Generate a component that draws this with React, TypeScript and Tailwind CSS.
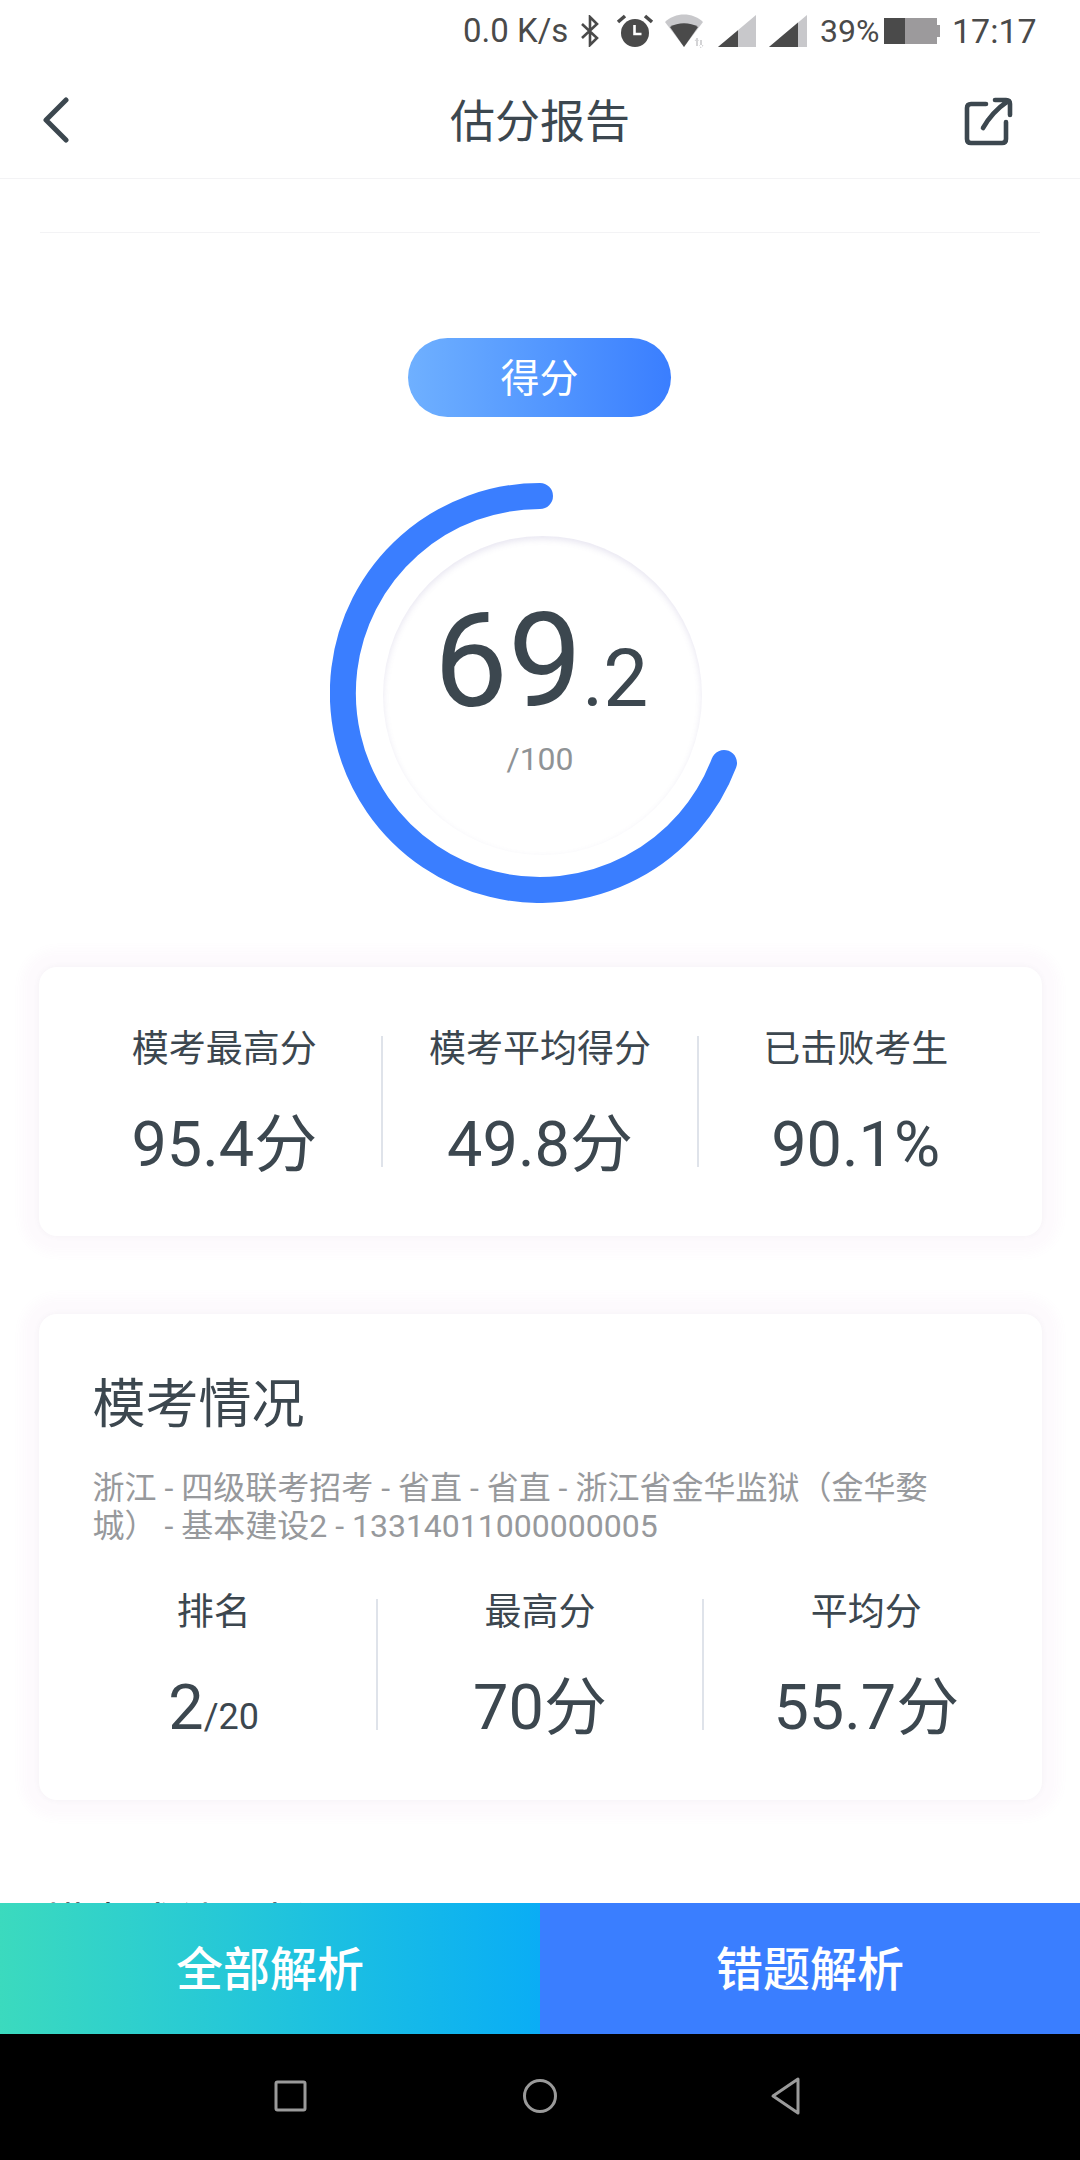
const ink = "text-[#3c474f]"

function StatusBar() {
  return (
    <div className="flex h-[60px] items-center pl-[463px] pt-[2px] text-[33px] text-[#4a4a4a]">
      <span className="w-[116px] whitespace-nowrap">0.0 K/s</span>
      <svg width="22" height="32" viewBox="0 0 22 32" fill="none" stroke="#4a4a4a" strokeWidth="2.6" className="mr-[15px] shrink-0">
        <path d="M3 9l15 14-7 7V2l7 7L3 23" />
      </svg>
      <svg width="38" height="34" viewBox="0 0 38 34" className="mr-[11px] shrink-0">
        <circle cx="19" cy="19" r="14" fill="#4a4a4a" />
        <path d="M18.5 11v9h7" fill="none" stroke="#fff" strokeWidth="2.6" />
        <path d="M2 8l7-6M36 8l-7-6" stroke="#4a4a4a" strokeWidth="3.6" />
      </svg>
      <svg width="40" height="34" viewBox="0 0 40 34" className="mr-[13px] shrink-0">
        <path d="M0 8C10-2 28-2 38 8L19 33z" fill="#c8c8cb" />
        <path d="M5 13c8-5 20-5 28 0L19 33z" fill="#4a4a4a" />
        <path d="M31 24h2v8h-2zM35 26h2v8h-2zM29.5 27l2.5-3 2 3zM34 31l2.500 3 2-3z" fill="#d4d4d6" />
      </svg>
      <svg width="38" height="32" viewBox="0 0 38 32" className="mr-[13px] shrink-0">
        <path d="M38 0v32H0z" fill="#c8c8cb" />
        <path d="M20 15.200V32H0z" fill="#4a4a4a" />
      </svg>
      <svg width="38" height="32" viewBox="0 0 38 32" className="mr-[13px] shrink-0">
        <path d="M38 0v32H0z" fill="#c8c8cb" />
        <path d="M29 7.600V32H0z" fill="#4a4a4a" />
      </svg>
      <span className="w-[64px] whitespace-nowrap text-[32px]">39%</span>
      <div className="mr-[12px] flex h-[26px] w-[56px] shrink-0 items-center">
        <div className="h-full w-[21px] bg-[#4a4a4a]" />
        <div className="h-full w-[32px] bg-[#9c9a9c]" />
        <div className="h-[12px] w-[3px] bg-[#9c9a9c]" />
      </div>
      <span className="whitespace-nowrap text-[34px]">17:17</span>
    </div>
  )
}

function Header() {
  return (
    <div className="grid h-[119px] grid-cols-[1fr_auto_1fr] items-center border-b border-[#f3f3f5] pl-[42px] pr-[64px]">
      <svg width="28" height="46" viewBox="0 0 28 46" fill="none" stroke="#3c474f" strokeWidth="5" strokeLinecap="round" strokeLinejoin="round" className="mt-[1px]">
        <path d="M24 3L4 23l20 20" />
      </svg>
      <span className={`mt-[8px] pl-[22px] text-[45px] ${ink}`}>估分报告</span>
      <svg width="54" height="54" viewBox="0 0 54 54" fill="none" stroke="#3c474f" strokeWidth="4.600" strokeLinecap="round" strokeLinejoin="round" className="mt-[3px] justify-self-end">
        <path d="M24 10H9Q5 10 5 14V45Q5 49 9 49H40Q44 49 44 45V28" />
        <path d="M21 34Q30 18 46 7M33 6H44Q48 6 48 10V21" />
      </svg>
    </div>
  )
}

function Ring() {
  return (
    <div className="relative mt-[66px] h-[420px] w-[420px] shrink-0">
      <svg width="420" height="420" viewBox="0 0 420 420" className="absolute inset-0">
        <path d="M210 13A197 197 0 1 0 394 280" fill="none" stroke="#3a7eff" strokeWidth="26" strokeLinecap="round" />
      </svg>
      <div className="absolute left-[53px] top-[53px] h-[319px] w-[319px] rounded-full shadow-[inset_0_3px_6px_rgba(110,100,170,0.16)]" />
      <div className="absolute inset-x-0 top-[123px] flex flex-col items-center">
        <div className={`flex items-baseline pl-[2px] leading-[110px] ${ink}`}>
          <span className="text-[132px]">69</span>
          <span className="text-[80px]">.2</span>
        </div>
        <span className="mt-[5px] text-[32px] leading-[40px] text-[#8f9396]">/100</span>
      </div>
    </div>
  )
}

function Stat({ label, value, small, divider }: { label: string; value: string; small?: string; divider?: boolean }) {
  return (
    <div className="relative flex flex-col items-center">
      {divider && <div className="absolute left-[-1px] top-[11px] h-[131px] w-[2px] bg-[#dfe3ea]" />}
      <span className={`text-[37px] leading-[50px] whitespace-nowrap ${ink}`}>{label}</span>
      <span className={`mt-[32px] h-[76px] text-[63px] leading-[76px] whitespace-nowrap ${ink}`}>
        {value}
        {small && <span className="text-[36px]">{small}</span>}
      </span>
    </div>
  )
}

const cardClass =
  "rounded-[18px] bg-white shadow-[0_0_5px_1px_rgba(120,120,140,0.05),0_0_10px_18px_rgba(200,120,200,0.035)]"

export default function App() {
  return (
    <div className="flex h-[2160px] w-[1080px] flex-col overflow-hidden bg-white font-['Roboto','Noto_Sans_CJK_SC',sans-serif]">
      <StatusBar />
      <Header />
      <div className="flex min-h-0 flex-1 flex-col items-center overflow-hidden">
        <div className="mt-[53px] h-px w-[1000px] shrink-0 bg-[#f3f3f5]" />
        <div className="mr-[1px] mt-[105px] flex h-[79px] w-[263px] shrink-0 items-center justify-center rounded-full bg-gradient-to-r from-[#6fb0ff] to-[#3a7eff] pt-[3px] text-[39px] text-white">
          得分
        </div>
        <Ring />
        <div className={`mt-[64px] grid h-[269px] w-[1003px] shrink-0 grid-cols-3 px-[28px] pt-[58px] ${cardClass}`}>
          <Stat label="模考最高分" value="95.4分" />
          <Stat label="模考平均得分" value="49.8分" divider />
          <Stat label="已击败考生" value="90.1%" divider />
        </div>
        <div className={`mt-[78px] h-[486px] w-[1003px] shrink-0 pt-[57px] ${cardClass}`}>
          <h2 className={`pl-[54px] text-[53px] leading-[68px] ${ink}`}>模考情况</h2>
          <p className="mt-[30px] w-[905px] pl-[54px] text-[32px] leading-[38px] text-[#97999c]">
            浙江 - 四级联考招考 - 省直 - 省直 - 浙江省金华监狱（金华婺城） - 基本建设2 - 13314011000000005
          </p>
          <div className="mt-[43px] grid grid-cols-3 px-[12px]">
            <Stat label="排名" value="2" small="/20" />
            <Stat label="最高分" value="70分" divider />
            <Stat label="平均分" value="55.7分" divider />
          </div>
        </div>
        <div className={`mt-[95px] w-full shrink-0 pl-[44px] text-[44px] leading-[60px] ${ink}`}>模考成绩分析</div>
      </div>
      <div className="flex h-[131px] shrink-0 text-[47px] font-medium text-white">
        <div className="flex w-1/2 items-center justify-center bg-gradient-to-r from-[#3bdabe] to-[#0aadf5] pt-[3px]">全部解析</div>
        <div className="flex w-1/2 items-center justify-center bg-[#3a7eff] pt-[3px]">错题解析</div>
      </div>
      <div className="flex h-[126px] shrink-0 items-center bg-black pb-[2px]">
        <svg width="1080" height="40" viewBox="0 0 1080 40" fill="none" stroke="#9a9a9a" strokeWidth="3" strokeLinejoin="round">
          <rect x="276" y="6" width="29" height="28" rx="1.5" />
          <circle cx="540" cy="20" r="15.500" />
          <path d="M798 3v34L773 20z" />
        </svg>
      </div>
    </div>
  )
}
